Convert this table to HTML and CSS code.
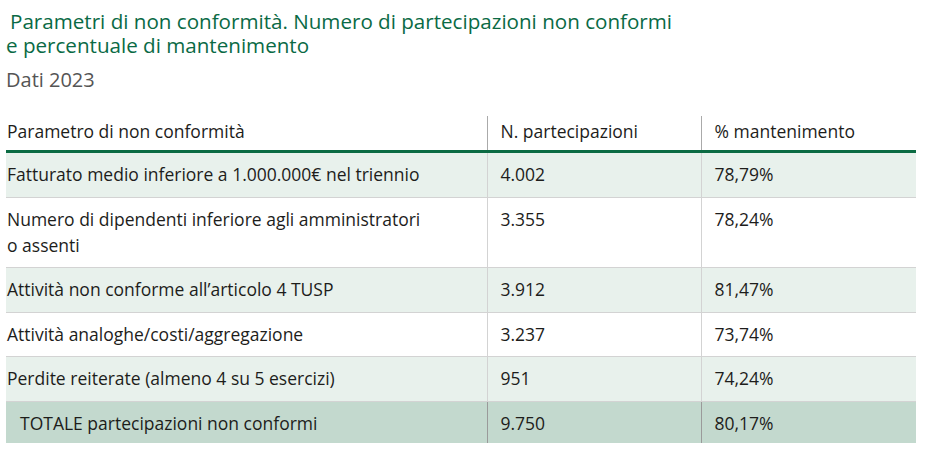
FILE: index.html
```html
<!DOCTYPE html>
<html lang="it">
<head>
<meta charset="utf-8">
<title>Parametri di non conformità</title>
<link rel="stylesheet" href="styles.css">
</head>
<body>
<div class="page">
  <h2 class="title">Parametri di non conformità. Numero di partecipazioni non conformi<br>e percentuale di mantenimento</h2>
  <p class="subtitle">Dati 2023</p>
  <table class="data">
    <colgroup>
      <col class="w1">
      <col class="w2">
      <col class="w3">
    </colgroup>
    <thead>
      <tr>
        <th class="c1">Parametro di non conformità</th>
        <th>N. partecipazioni</th>
        <th>% mantenimento</th>
      </tr>
    </thead>
    <tbody>
      <tr class="alt">
        <td class="c1">Fatturato medio inferiore a 1.000.000€ nel triennio</td>
        <td>4.002</td>
        <td>78,79%</td>
      </tr>
      <tr>
        <td class="c1">Numero di dipendenti inferiore agli amministratori<br>o assenti</td>
        <td>3.355</td>
        <td>78,24%</td>
      </tr>
      <tr class="alt">
        <td class="c1">Attività non conforme all’articolo 4 TUSP</td>
        <td>3.912</td>
        <td>81,47%</td>
      </tr>
      <tr>
        <td class="c1">Attività analoghe/costi/aggregazione</td>
        <td>3.237</td>
        <td>73,74%</td>
      </tr>
      <tr class="alt">
        <td class="c1">Perdite reiterate (almeno 4 su 5 esercizi)</td>
        <td>951</td>
        <td>74,24%</td>
      </tr>
      <tr class="total">
        <td class="c1">TOTALE partecipazioni non conformi</td>
        <td>9.750</td>
        <td>80,17%</td>
      </tr>
    </tbody>
  </table>
</div>
</body>
</html>
```
FILE: styles.css
```css
html, body {
  margin: 0;
  padding: 0;
  background: #ffffff;
}
.page {
  padding: 9px 13px 0 6px;
  font-family: "Open Sans", "Noto Sans", sans-serif;
  color: #1d1d1b;
}
.title {
  margin: 0;
  font-size: 20.6px;
  line-height: 24px;
  font-weight: 400;
  color: #0a6a45;
  text-indent: 4px;
}
.subtitle {
  margin: 11px 0 0 0;
  font-size: 20px;
  line-height: 24px;
  color: #555555;
}
.data {
  margin-top: 24px;
  width: 910px;
  table-layout: fixed;
  border-collapse: collapse;
  font-size: 17.5px;
  line-height: 26px;
}
.data .w1 { width: 481px; }
.data .w2 { width: 214px; }
.data .w3 { width: 215px; }
.data th, .data td {
  text-align: left;
  vertical-align: top;
  font-weight: 400;
  padding: 8px 8px 9.5px 13px;
}
.data .c1 { padding-left: 1px; }
.data th {
  padding-top: 2px;
  padding-bottom: 6px;
  border-bottom: 3px solid #0b6b43;
}
.data th + th { border-left: 1px solid #aaaaaa; }
.data td { border-bottom: 1px solid #d3d3d3; }
.data td + td { border-left: 1px solid #d3d3d3; }
.data tr.alt td { background: #e8f1ec; }
.data tr.total td {
  background: #c3d9ce;
  border-bottom: none;
  padding-top: 8px;
  padding-bottom: 7px;
}
.data tr.total td + td { border-left-color: #9a9a9a; }
.data tr.total .c1 { padding-left: 14px; }
```
